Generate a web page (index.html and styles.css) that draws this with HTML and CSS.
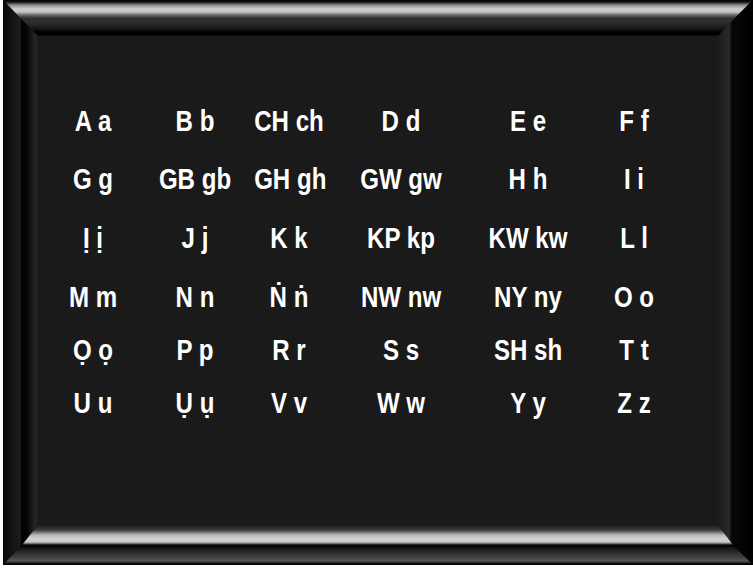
FILE: index.html
```html
<!DOCTYPE html>
<html lang="ig">
<head>
    <meta charset="UTF-8">
    <meta name="viewport" content="width=device-width, initial-scale=1.0">
    <title>Mkpụrụ edemede Igbo</title>
    <link rel="stylesheet" href="styles.css">
</head>
<body>

    <div class="frameClass outerFrameClass">
        <div class="bevelClass bevelTop"></div>
        <div class="bevelClass bevelLeft"></div>
        <div class="bevelClass bevelRight"></div>
        <div class="bevelClass bevelBottom"></div>

        <div class="frameClass innerFrameClass">
            <div class="bevelClass bevelTop"></div>
            <div class="bevelClass bevelLeft"></div>
            <div class="bevelClass bevelRight"></div>
            <div class="bevelClass bevelBottom"></div>

            <div class="boardClass">
                <div class="alphabetClass">
                    <div>A a</div>
                    <div>B b</div>
                    <div>CH ch</div>
                    <div>D d</div>
                    <div>E e</div>
                    <div>F f</div>

                    <div>G g</div>
                    <div>GB gb</div>
                    <div>GH gh</div>
                    <div>GW gw</div>
                    <div>H h</div>
                    <div>I i</div>

                    <div>Ị ị</div>
                    <div>J j</div>
                    <div>K k</div>
                    <div>KP kp</div>
                    <div>KW kw</div>
                    <div>L l</div>

                    <div>M m</div>
                    <div>N n</div>
                    <div>Ṅ ṅ</div>
                    <div>NW nw</div>
                    <div>NY ny</div>
                    <div>O o</div>

                    <div>Ọ ọ</div>
                    <div>P p</div>
                    <div>R r</div>
                    <div>S s</div>
                    <div>SH sh</div>
                    <div>T t</div>

                    <div>U u</div>
                    <div>Ụ ụ</div>
                    <div>V v</div>
                    <div>W w</div>
                    <div>Y y</div>
                    <div>Z z</div>
                </div>
            </div>
        </div>
    </div>

</body>
</html>
```

FILE: styles.css
```css
body{
    margin: 0;
    background: #ffffff;
    width: 753px;
    height: 570px;
    overflow: hidden;
}

/* picture frame: a 3x3 grid, the four bevels overlap at the mitred corners */
.frameClass{
    display: grid;
    grid-template-columns: var(--l) 1fr var(--r);
    grid-template-rows: var(--t) 1fr var(--b);
    background: #000;
}
.outerFrameClass{
    --l: 19px;
    --t: 20px;
    --r: 20px;
    --b: 20px;
    margin-left: 3px;
    width: 750px;
    height: 565px;
}
.innerFrameClass{
    --l: 16px;
    --t: 16px;
    --r: 15px;
    --b: 20px;
    grid-area: 2 / 2 / 3 / 3;
}

.bevelTop{
    grid-area: 1 / 1 / 2 / 4;
    clip-path: polygon(0 0, 100% 0, calc(100% - var(--r)) 100%, var(--l) 100%);
}
.bevelBottom{
    grid-area: 3 / 1 / 4 / 4;
    clip-path: polygon(var(--l) 0, calc(100% - var(--r)) 0, 100% 100%, 0 100%);
}
.bevelLeft{
    grid-area: 1 / 1 / 4 / 2;
    clip-path: polygon(0 0, 100% var(--t), 100% calc(100% - var(--b)), 0 100%);
}
.bevelRight{
    grid-area: 1 / 3 / 4 / 4;
    clip-path: polygon(0 var(--t), 100% 0, 100% 100%, 0 calc(100% - var(--b)));
}

.outerFrameClass > .bevelTop{
    background: linear-gradient(to bottom, #000 0, #151515 2px, #8c8c8c 5px, #cfcfcf 9px, #c2c2c2 12px, #6a6a6a 15px, #333 18px, #2a2a2a 20px);
}
.outerFrameClass > .bevelLeft{
    background: linear-gradient(to right, #080808 0, #141414 10px, #1c1c1c 17px, #000 19px);
}
.outerFrameClass > .bevelRight{
    background: linear-gradient(to right, #060606 0, #000 20px);
}
.outerFrameClass > .bevelBottom{
    background: linear-gradient(to bottom, #000 0, #141414 3px, #2e2e2e 8px, #4a4a4a 14px, #575757 16px, #1a1a1a 18px, #000 19px, #000 20px);
}

.innerFrameClass > .bevelTop{
    background: linear-gradient(to bottom, #333 0, #222 6px, #111 10px, #000 12px, #000 15px, #151515 16px);
}
.innerFrameClass > .bevelLeft{
    background: linear-gradient(to right, #000 0, #050505 5px, #262626 13px, #1e1e1e 16px);
}
.innerFrameClass > .bevelRight{
    background: linear-gradient(to right, #1b1b1b 0, #2a2a2a 11px, #111 13px, #000 15px);
}
.innerFrameClass > .bevelBottom{
    background: linear-gradient(to bottom, #1a1a1a 0, #3c3c3c 5px, #b8b8b8 10px, #d3d3d3 14px, #c8c8c8 17px, #555 19px, #000 20px);
}

.boardClass{
    grid-area: 2 / 2 / 3 / 3;
    background: #1a1a1a;
    padding: 69px 0 0 5px;
}

.alphabetClass{
    display: grid;
    grid-template-columns: 100px 104px 84px 140px 114px 98px;
    grid-template-rows: 58px 59px 59px 53px 53px 40px;
    font-family: "Liberation Sans", Arial, sans-serif;
    font-weight: bold;
    font-size: 29px;
    line-height: 32px;
    color: #ffffff;
    text-align: center;
    white-space: nowrap;
}
/* narrow face: squeeze each letter pair round its own centre */
.alphabetClass div{
    transform: scaleX(0.83);
}
```
